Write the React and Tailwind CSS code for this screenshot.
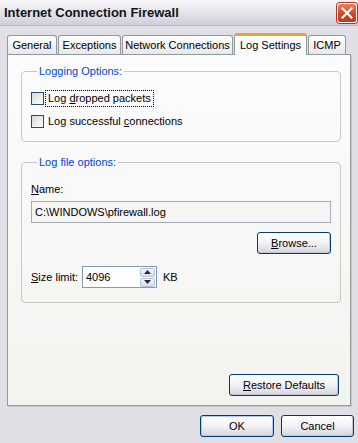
import React from "react";

function U({ children }) {
  return <span className="underline underline-offset-[1px]">{children}</span>;
}

function CheckBox() {
  return (
    <span className="block w-[13px] h-[13px] shrink-0 border border-[#1c5180] bg-linear-to-br from-[#d8d8d2] to-white" />
  );
}

function XpButton({ children, className = "", isDefault = false }) {
  return (
    <button
      className={
        "h-[22px] rounded-[3px] border border-[#003c74] bg-linear-to-b from-white via-[#f2f2f6] to-[#d4d4e0] text-[11px] text-black leading-none " +
        (isDefault ? "shadow-[inset_0_0_0_1px_#b8c8ee] " : "shadow-[inset_-1px_-1px_0_#c6c6d2] ") +
        className
      }
    >
      {children}
    </button>
  );
}

function Tab({ label, width, selected = false }) {
  if (selected) {
    return (
      <div
        className="h-[22px] ml-[1px] shrink-0 flex items-start justify-center pt-[3px] rounded-t-[3px] border-x border-[#919b9c] border-t-[3px] border-t-[#e8a33a] bg-[#fcfcfe]"
        style={{ width }}
      >
        {label}
      </div>
    );
  }
  return (
    <div
      className="h-[19px] mb-[1px] ml-[1px] first:ml-0 shrink-0 flex items-center justify-center rounded-t-[3px] border border-b-0 border-[#919b9c] bg-linear-to-b from-white to-[#e8e8ea]"
      style={{ width }}
    >
      {label}
    </div>
  );
}

function Spinner() {
  return (
    <div className="flex flex-col gap-[1px] py-[1px] pr-[1px]">
      <span className="w-[15px] h-[9px] flex items-center justify-center rounded-[2px] border border-[#b7c2dc] bg-linear-to-b from-[#f6f6fb] to-[#d6dcec]">
        <svg width="7" height="4" viewBox="0 0 7 4">
          <path d="M0 4 L3.5 0 L7 4 Z" fill="#2a2a2a" />
        </svg>
      </span>
      <span className="w-[15px] h-[9px] flex items-center justify-center rounded-[2px] border border-[#b7c2dc] bg-linear-to-b from-[#f6f6fb] to-[#d6dcec]">
        <svg width="7" height="4" viewBox="0 0 7 4">
          <path d="M0 0 L3.5 4 L7 0 Z" fill="#2a2a2a" />
        </svg>
      </span>
    </div>
  );
}

export default function App() {
  return (
    <div className="w-[358px] h-[443px] overflow-hidden flex flex-col bg-[#e0dfe6] text-[11px] leading-[13px] text-black font-['Liberation_Sans',Arial,sans-serif]">
      {/* title bar */}
      <div className="h-[26px] shrink-0 flex items-center justify-between pl-[4px] pr-[1px] bg-linear-to-b from-[#f7f7fa] via-[#e4e4ec] to-[#cfcfda] border-b border-[#b4b4c2]">
        <span className="font-bold text-[13px] text-[#141414]">
          Internet Connection Firewall
        </span>
        <span className="w-[20px] h-[20px] flex items-center justify-center rounded-[3px] border border-white bg-linear-to-b from-[#e8836a] via-[#d2492c] to-[#c03a20] shadow-[0_0_0_1px_#b03a24]">
          <svg width="12" height="12" viewBox="0 0 12 12">
            <path
              d="M1.5 1.5 L10.5 10.5 M10.5 1.5 L1.5 10.5"
              stroke="white"
              strokeWidth="2.2"
              strokeLinecap="square"
            />
          </svg>
        </span>
      </div>

      <div className="flex-1 flex flex-col px-[7px] pt-[7px]">
        {/* tabs */}
        <div className="h-[22px] -mb-[1px] relative z-10 flex items-end">
          <Tab label="General" width={50} />
          <Tab label="Exceptions" width={63} />
          <Tab label="Network Connections" width={111} />
          <Tab label="Log Settings" width={73} selected />
          <Tab label="ICMP" width={38} />
        </div>

        {/* tab panel */}
        <div className="h-[352px] flex flex-col border border-[#919b9c] bg-linear-to-b from-[#fcfcfe] to-[#f3f3ef] shadow-[1px_1px_0_#c8c8cc]">
          <fieldset className="ml-[13px] mt-[10px] w-[320px] rounded-[4px] border border-[#c9c9c0] pl-[9px] pr-[9px] pt-[14px] pb-[13px]">
            <legend className="ml-[6px] px-[2px] text-[#0046d5]">
              Logging Options:
            </legend>
            <div className="flex items-center h-[13px]">
              <CheckBox />
              <span className="ml-[3px] px-[1px] outline-1 outline-dotted outline-black outline-offset-[1px]">
                Log <U>d</U>ropped packets
              </span>
            </div>
            <div className="flex items-center h-[13px] mt-[10px]">
              <CheckBox />
              <span className="ml-[4px]">
                Log successful <U>c</U>onnections
              </span>
            </div>
          </fieldset>

          <fieldset className="ml-[13px] mt-[14px] w-[320px] rounded-[4px] border border-[#c9c9c0] pl-[9px] pr-[9px] pt-[14px] pb-[14px] flex flex-col">
            <legend className="ml-[6px] px-[2px] text-[#0046d5]">
              Log file options:
            </legend>
            <div className="h-[13px]">
              <U>N</U>ame:
            </div>
            <div className="mt-[5px] h-[22px] flex items-center pl-[3px] border border-[#a5acb5] bg-[#f6f6f4]">
              C:\WINDOWS\pfirewall.log
            </div>
            <XpButton className="mt-[9px] self-end w-[74px]">
              <U>B</U>rowse...
            </XpButton>
            <div className="mt-[12px] flex items-center">
              <span className="w-[51px]">
                <U>S</U>ize limit:
              </span>
              <div className="w-[75px] h-[22px] flex items-center justify-between border border-[#7f9db9] bg-white pl-[3px]">
                <span>4096</span>
                <Spinner />
              </div>
              <span className="ml-[6px]">KB</span>
            </div>
          </fieldset>

          <XpButton className="mt-auto mb-[9px] mr-[11px] self-end w-[110px]">
            <U>R</U>estore Defaults
          </XpButton>
        </div>

        {/* dialog buttons */}
        <div className="mt-[9px] -mr-[3px] flex justify-end gap-[7px]">
          <XpButton className="w-[74px]" isDefault>
            OK
          </XpButton>
          <XpButton className="w-[73px]">Cancel</XpButton>
        </div>
      </div>
    </div>
  );
}
